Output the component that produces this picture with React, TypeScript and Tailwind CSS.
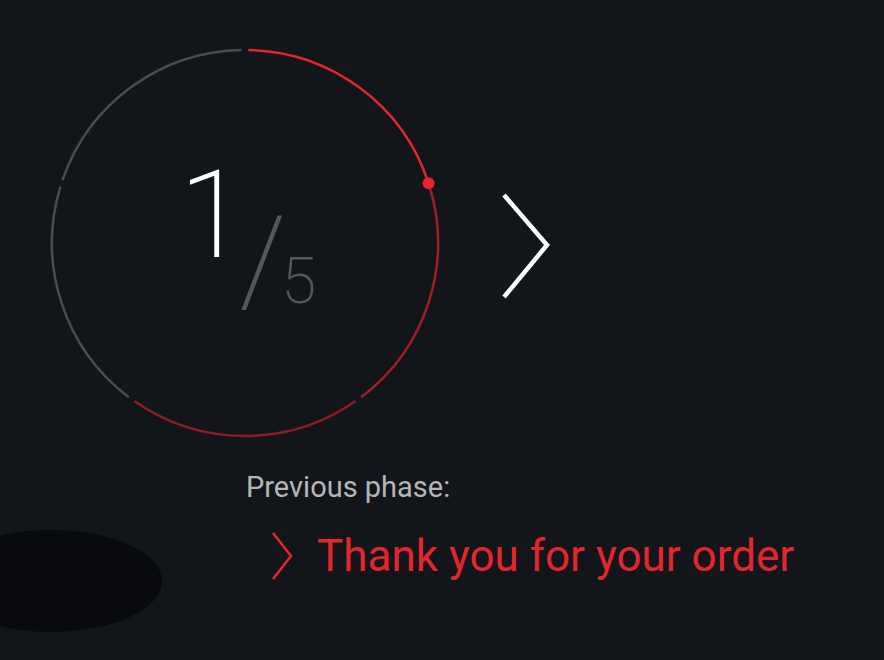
import React from 'react';

const CX = 196;
const CY = 196;
const R = 193;

function pt(deg: number) {
  const a = (deg * Math.PI) / 180;
  return [CX + R * Math.sin(a), CY - R * Math.cos(a)];
}

function arc(from: number, to: number) {
  const [x1, y1] = pt(from);
  const [x2, y2] = pt(to);
  const large = to - from > 180 ? 1 : 0;
  return `M ${x1} ${y1} A ${R} ${R} 0 ${large} 1 ${x2} ${y2}`;
}

const segments = [
  { from: 1, to: 72, color: '#e3262d' },
  { from: 72, to: 143, color: '#a01f26' },
  { from: 145, to: 215, color: '#8e1c22' },
  { from: 217, to: 287, color: '#4a4c50' },
  { from: 289, to: 359, color: '#4a4c50' },
];

function PhaseRing() {
  const [dx, dy] = pt(72);
  return (
    <div className="relative h-[392px] w-[392px] shrink-0">
      <svg width="392" height="392" viewBox="0 0 392 392" className="absolute inset-0">
        {segments.map((s) => (
          <path key={s.from} d={arc(s.from, s.to)} fill="none" stroke={s.color} strokeWidth="2.5" />
        ))}
        <circle cx={dx} cy={dy} r="6" fill="#e3262d" />
      </svg>
      <span className="absolute left-[130px] top-[108px] font-['Roboto'] text-[122px] font-extralight leading-none tracking-[-0.12em] text-white">
        1
      </span>
      <span className="absolute left-[190px] top-[154px] font-['Roboto'] text-[122px] font-extralight leading-none tracking-[-0.1em] text-[#55575b]">
        /
      </span>
      <span className="absolute left-[232px] top-[203px] font-['Roboto'] text-[64px] font-extralight leading-none text-[#55575b]">
        5
      </span>
    </div>
  );
}

export default function App() {
  return (
    <div className="relative h-[660px] w-[884px] overflow-hidden bg-[#12151a]">
      <div className="absolute left-[-60px] top-[530px] h-[102px] w-[222px] rounded-[50%] bg-[#08090c]" />
      <div className="relative flex flex-col pl-[49px] pt-[47px]">
        <div className="flex items-center gap-[60px]">
          <PhaseRing />
          <svg width="50" height="106" viewBox="0 0 50 106" className="mt-[6px]">
            <polyline points="3,2 46,52 3,104" fill="none" stroke="#ffffff" strokeWidth="4.5" />
          </svg>
        </div>
        <div className="ml-[197px] mt-[34px] flex flex-col">
          <p className="font-['Roboto'] text-[29px] font-normal leading-none text-[#b4b6b9]">
            Previous phase:
          </p>
          <div className="ml-[25px] mt-[29px] flex items-center gap-[24px]">
            <svg width="22" height="50" viewBox="0 0 22 50">
              <polyline points="2,2 20,25 2,48" fill="none" stroke="#e3262d" strokeWidth="2.5" />
            </svg>
            <p className="font-['Roboto'] text-[44px] font-normal leading-none text-[#e3262d]">
              Thank you for your order
            </p>
          </div>
        </div>
      </div>
    </div>
  );
}
